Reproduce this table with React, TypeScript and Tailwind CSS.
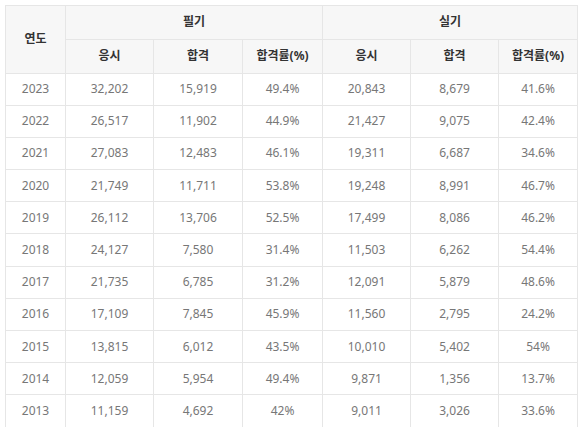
import React from 'react';

type Row = {
  year: string;
  written: [string, string, string];
  practical: [string, string, string];
};

const rows: Row[] = [
  { year: '2023', written: ['32,202', '15,919', '49.4%'], practical: ['20,843', '8,679', '41.6%'] },
  { year: '2022', written: ['26,517', '11,902', '44.9%'], practical: ['21,427', '9,075', '42.4%'] },
  { year: '2021', written: ['27,083', '12,483', '46.1%'], practical: ['19,311', '6,687', '34.6%'] },
  { year: '2020', written: ['21,749', '11,711', '53.8%'], practical: ['19,248', '8,991', '46.7%'] },
  { year: '2019', written: ['26,112', '13,706', '52.5%'], practical: ['17,499', '8,086', '46.2%'] },
  { year: '2018', written: ['24,127', '7,580', '31.4%'], practical: ['11,503', '6,262', '54.4%'] },
  { year: '2017', written: ['21,735', '6,785', '31.2%'], practical: ['12,091', '5,879', '48.6%'] },
  { year: '2016', written: ['17,109', '7,845', '45.9%'], practical: ['11,560', '2,795', '24.2%'] },
  { year: '2015', written: ['13,815', '6,012', '43.5%'], practical: ['10,010', '5,402', '54%'] },
  { year: '2014', written: ['12,059', '5,954', '49.4%'], practical: ['9,871', '1,356', '13.7%'] },
  { year: '2013', written: ['11,159', '4,692', '42%'], practical: ['9,011', '3,026', '33.6%'] },
];

const th = 'border border-[#e6e6e6] bg-[#f7f7f7] font-bold text-[#333] text-center';
const td = 'border border-[#e6e6e6] text-center text-[#777]';

const App: React.FC = () => {
  return (
    <div className="min-h-screen bg-white pt-[5px] pl-[5px] font-['Noto_Sans','Noto_Sans_CJK_KR',sans-serif] text-[12px]">
      <table className="table-fixed border-collapse w-[572px]">
        <colgroup>
          <col className="w-[60px]" />
          <col className="w-[88px]" />
          <col className="w-[89px]" />
          <col className="w-[80px]" />
          <col className="w-[88px]" />
          <col className="w-[88px]" />
          <col className="w-[79px]" />
        </colgroup>
        <thead>
          <tr className="h-[33.5px]">
            <th rowSpan={2} className={th}>연도</th>
            <th colSpan={3} className={th}>필기</th>
            <th colSpan={3} className={th}>실기</th>
          </tr>
          <tr className="h-[34px]">
            <th className={th}>응시</th>
            <th className={th}>합격</th>
            <th className={th}>합격률(%)</th>
            <th className={th}>응시</th>
            <th className={th}>합격</th>
            <th className={th}>합격률(%)</th>
          </tr>
        </thead>
        <tbody>
          {rows.map((r) => (
            <tr key={r.year} className="h-[32.2px]">
              <td className={td}>{r.year}</td>
              {r.written.map((v, i) => (
                <td key={'w' + i} className={td}>{v}</td>
              ))}
              {r.practical.map((v, i) => (
                <td key={'p' + i} className={td}>{v}</td>
              ))}
            </tr>
          ))}
        </tbody>
      </table>
    </div>
  );
};

export default App;
